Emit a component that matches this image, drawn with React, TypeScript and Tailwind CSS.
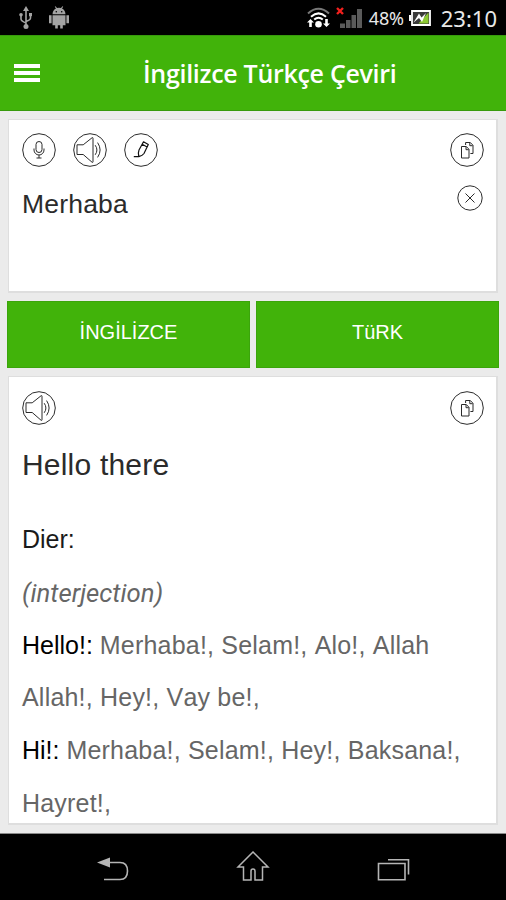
import type { ReactNode } from "react"

function RoundButton({ label, children }: { label: string; children: ReactNode }) {
  return (
    <button aria-label={label} className="block size-[34px] shrink-0">
      <svg viewBox="0 0 34 34" className="size-full" fill="none" stroke="#2b2b2b" strokeWidth="1">
        <circle cx="17" cy="17" r="16.3" />
        {children}
      </svg>
    </button>
  )
}

function SpeakerButton() {
  return (
    <RoundButton label="Listen">
      <path d="M4 11.800h6.200L19 4.800q1-.6 1 .5v23.400q0 1.100-1 .5l-8.800-7.700H4zM22.200 12.200q3.400 4.800 0 9.600M24.600 9.600q5 7.400 0 14.800" strokeLinejoin="round" />
    </RoundButton>
  )
}

function CopyButton() {
  return (
    <RoundButton label="Copy">
      <path d="M11.500 13.500h4.800l2.700 2.800v8.700h-7.500zM16 13.800v2.900h2.800M15.600 12V9.500h4.700l2.700 2.800v8.200h-2.600M19.800 9.700v3h2.900" />
    </RoundButton>
  )
}

function StatusBar() {
  return (
    <div className="flex h-[35px] items-center bg-black">
      <svg width="14" height="24" viewBox="0 0 14 24" className="ml-[19px]" fill="#a3a3a3" stroke="#a3a3a3">
        <path d="M7 5v15M2 9v4q0 2 5 4M11.500 9v3q0 2-4.500 3.500" fill="none" strokeWidth="1.600" />
        <path d="M7 0l3 5H4z" stroke="none" />
        <circle cx="2" cy="8.800" r="1.800" stroke="none" />
        <path d="M10 7h3v3.200h-3z" stroke="none" />
        <circle cx="7" cy="20.400" r="2.500" stroke="none" />
      </svg>
      <svg width="20" height="24" viewBox="0 0 20 24" className="ml-4" fill="#a3a3a3">
        <path d="M3.500 8.200C3.700 5 5.200 3.300 7 2.500L5.800.8l.8-.5L8 2.100q2-.5 4 0L13.400.3l.8.5L13 2.500c1.800.8 3.300 2.500 3.500 5.700zM3.500 9.200h13v10h-2.700v3.300h-2.600v-3.300H8.800v3.300H6.200v-3.300H3.500zM0 9.200h2.600v8H0zM17.400 9.200H20v8h-2.600z" />
        <circle cx="7.300" cy="5.700" r=".8" fill="black" />
        <circle cx="12.700" cy="5.700" r=".8" fill="black" />
      </svg>
      <div className="ml-auto flex items-center text-[#e8e8e8]">
        <svg width="23" height="22" viewBox="0 0 23 22" fill="none" stroke="white" strokeWidth="2">
          <path d="M1 6.500Q11.500-3 22 6.500" stroke="#777" />
          <path d="M4 9.800Q11.500 3 19 9.800M7.200 12.600Q11.500 9 15.800 12.600" />
          <circle cx="11.500" cy="17.300" r="3.300" fill="white" stroke="none" />
          <path d="M0 15.500L3.500 12 7 15.500H4.800V20H2.200v-4.500zM16 16.500L19.500 20l3.500-3.500h-2.200V12h-2.600v4.500z" fill="white" stroke="none" />
        </svg>
        <svg width="27" height="22" viewBox="0 0 27 22" className="ml-[6px]" fill="#5a5a5a">
          <path d="M4 16.500h5V21H4zM10 13h4.500v8H10zM15.500 8h4.500v13h-4.500zM21 2h5v19h-5z" />
          <path d="M1 1l6 6M7 1L1 7" stroke="#f2201d" strokeWidth="2.400" />
        </svg>
        <span className="ml-[6px] font-['Noto_Sans'] text-[18px] leading-none tracking-[-0.2px]">48%</span>
        <svg width="22" height="16" viewBox="0 0 22 16" className="ml-[5px]">
          <path d="M0 5h2v6H0z" fill="white" />
          <path d="M3 1h18v14H3z" fill="#3a3a3a" stroke="white" strokeWidth="1.800" />
          <path d="M19.500 2.500v11H9.500z" fill="#8cc832" />
          <path d="M4.500 12.500L10 3.500l2.500 4L17 3l-4 9-3-4z" fill="white" />
        </svg>
        <span className="mr-[9px] ml-[10px] font-['Noto_Sans'] text-[22px] leading-none">23:10</span>
      </div>
    </div>
  )
}

function NavBar() {
  return (
    <nav className="flex h-[67px] shrink-0 border-t border-[#8a8a8a] bg-black pt-[17px] pl-24">
      <svg width="34" height="34" viewBox="0 0 34 34" fill="none" stroke="#b5b5b5" strokeWidth="1.600">
        <path d="M12 11.500h12q7.500 0 7.500 8.500t-7.500 8.500H8" />
        <path d="M1 11.500l13-5v10z" fill="#b5b5b5" stroke="none" />
      </svg>
      <svg width="34" height="34" viewBox="0 0 34 34" className="ml-[106px]" fill="none" stroke="#b5b5b5" strokeWidth="1.500">
        <path d="M17 1L2 16h5.500v13H15v-9q0-2 2-2t2 2v9h7.500V16H32z" />
      </svg>
      <svg width="34" height="34" viewBox="0 0 34 34" className="ml-[106px]" fill="none" stroke="#b5b5b5" strokeWidth="1.600">
        <path d="M2.500 12.500h26.500v16.300H2.500zM12 8.800h20.500V23.500" />
      </svg>
    </nav>
  )
}

const meanings = [
  { word: "Hello!:", lines: ["Merhaba!, Selam!, Alo!, Allah", "Allah!, Hey!, Vay be!,"] },
  { word: "Hi!:", lines: ["Merhaba!, Selam!, Hey!, Baksana!,", "Hayret!,"] },
]

export default function App() {
  return (
    <div className="flex h-[900px] w-[506px] flex-col overflow-hidden bg-[#ebebeb] font-['Liberation_Sans',Arial,sans-serif]">
      <StatusBar />
      <header className="flex h-[76px] shrink-0 items-center border-t border-b border-t-[#379a0c] border-b-[#379a0c] bg-[#41b30a]">
        <button aria-label="Menu" className="ml-[14px] flex w-[26px] flex-col gap-[3px]">
          <span className="h-1 bg-white" />
          <span className="h-1 bg-white" />
          <span className="h-1 bg-white" />
        </button>
        <h1 className="ml-[103px] font-['Open_Sans','Noto_Sans',sans-serif] text-[25px] leading-none font-semibold tracking-[-0.3px] whitespace-nowrap text-white">
          İngilizce Türkçe Çeviri
        </h1>
      </header>

      <section className="mx-2 mt-2 h-[174px] w-[490px] shrink-0 border border-r-2 border-b-2 border-[#dedede] bg-white pt-[13px] pr-[12px] pl-[13px]">
        <div className="flex gap-[17px]">
          <RoundButton label="Speak">
            <path d="M14 11.500a3 3 0 0 1 6 0v5a3 3 0 0 1-6 0zM12 15.500v1.500a5 5 0 0 0 10 0v-1.500M17 22v3M14.500 25h5" />
          </RoundButton>
          <SpeakerButton />
          <RoundButton label="Write">
            <path d="M9.800 23.600h5M19.500 8.800l4.800 2.800-4.300 8.900q-1.500 2-5.200 3.100-1-3.600.2-6.600zM18.200 11.300l4.900 2.800" stroke="#111" strokeWidth="1.200" strokeLinejoin="round" />
          </RoundButton>
          <div className="ml-auto">
            <CopyButton />
          </div>
        </div>
        <div className="mt-[18px] flex justify-between">
          <p className="mt-[4px] text-[26.500px] leading-[30px] tracking-[0.2px] text-[#2b2b2b]">Merhaba</p>
          <button aria-label="Clear" className="mr-[1px] size-[26px]">
            <svg viewBox="0 0 26 26" fill="none" stroke="#2b2b2b" strokeWidth="1">
              <circle cx="13" cy="13" r="12.200" />
              <path d="M8.500 8.500l9 9M17.500 8.500l-9 9" />
            </svg>
          </button>
        </div>
      </section>

      <div className="mx-[7px] mt-2 flex h-[67px] w-[492px] shrink-0 gap-[6px] text-[20px] text-white">
        <button className="flex-1 border border-[#3ba50b] bg-[#41b30a] pb-[5px]">İNGİLİZCE</button>
        <button className="flex-1 border border-[#3ba50b] bg-[#41b30a] pb-[5px]">TüRK</button>
      </div>

      <section className="mx-2 mt-2 h-[449px] w-[490px] shrink-0 overflow-hidden border border-r-2 border-b-2 border-[#dedede] bg-white pt-[14px] pr-[12px] pl-[13px]">
        <div className="flex justify-between">
          <SpeakerButton />
          <CopyButton />
        </div>
        <p className="mt-[22px] text-[30px] leading-[36px] tracking-[0.200px] text-[#2b2b2b]">Hello there</p>
        <div className="mt-[30px] text-[25px] leading-[52.750px] whitespace-nowrap text-[#666]">
          <p className="text-[#1a1a1a]">Dier:</p>
          <p className="relative top-px font-[Roboto] text-[25.700px] italic">(interjection)</p>
          {meanings.map(({ word, lines }) => (
            <p key={word}>
              <span className="text-black">{word}</span>{" "}
              <span className="tracking-[0.200px] [font-kerning:none]">
                {lines[0]}
                <br />
                {lines[1]}
              </span>
            </p>
          ))}
        </div>
      </section>

      <div className="flex-1" />
      <NavBar />
    </div>
  )
}
